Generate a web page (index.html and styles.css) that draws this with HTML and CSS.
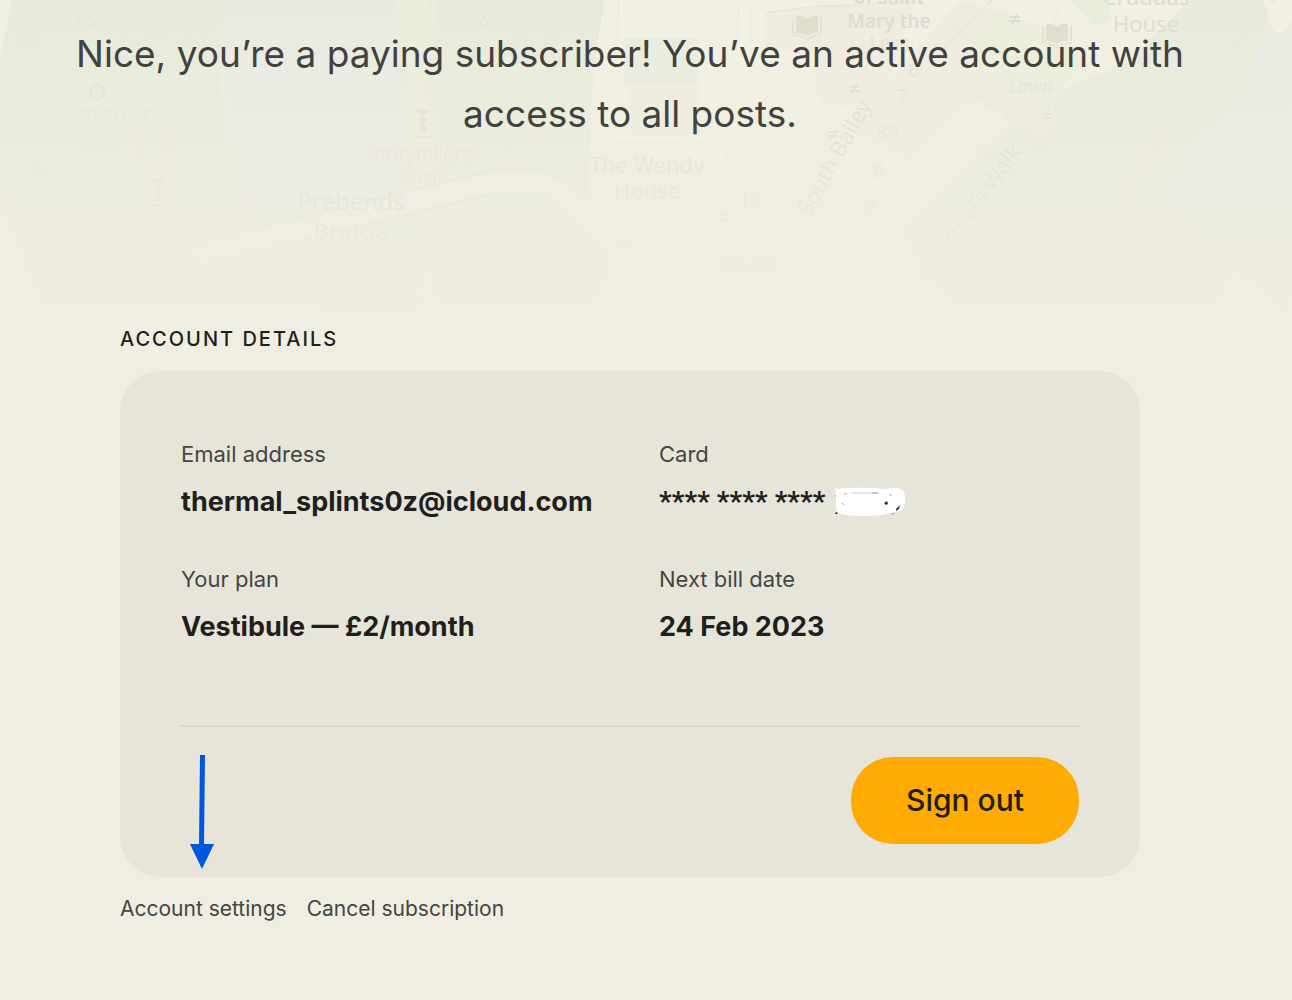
FILE: index.html
```html
<!DOCTYPE html>
<html lang="en">
<head>
<meta charset="utf-8">
<meta name="viewport" content="width=device-width, initial-scale=1">
<title>Account</title>
<link rel="stylesheet" href="styles.css">
</head>
<body>
<svg class="map" viewBox="0 0 1292 320" preserveAspectRatio="xMidYMin slice" aria-hidden="true">
  <defs>
    <linearGradient id="fade" x1="0" y1="0" x2="0" y2="1">
      <stop offset="0" stop-color="#f0eee2" stop-opacity="0"/>
      <stop offset="0.4" stop-color="#f0eee2" stop-opacity="0.48"/>
      <stop offset="0.75" stop-color="#f0eee2" stop-opacity="0.85"/>
      <stop offset="1" stop-color="#f0eee2"/>
    </linearGradient>
    <g id="book"><path d="M3 2q7-1 11 3v17q-5-4-11-3zM25 2q-7-1-11 3v17q5-4 11-3z" fill="#dfdccc"/><path d="M0 4v17q9 0 14 5 5-5 14-5V4" fill="none" stroke="#e4e1d2" stroke-width="2"/></g>
    <g id="tree" fill="none" stroke="#e0e5d3"><path d="M5 14V9M5 9a4 4 0 1 1 1 0M14 14v-4M10 10l4-9 5 9z"/></g>
    <g id="gate" fill="none" stroke="#d8d7cd" stroke-width="1.500"><path d="M0 3h11M0 7h11M8 0L3 10"/></g>
    <path id="tower" d="M-1 0h12v3H8L6 6l3 4-3 4 3 4-1 5H2l-1-5 3-4-3-4 3-4-2-3h-3zM-4 26h17v2H-4z" fill="#dddccb"/>
  </defs>
  <rect width="1292" height="320" fill="#f2efe3"/>
  <path d="M12 0H221v80l12 75 12 70 100 95H45L15 235 0 200V60z" fill="#e7ebda"/>
  <path d="M397 0H603L592 90l-5 100-4 25 30 35-20 70H430l-20-130-10-90z" fill="#e7ebda"/>
  <path d="M397 0h38v320h-20L405 120z" fill="#eaedda"/>
  <path d="M221 0H397l4 75 8 60 10 185H330L250 225l-18-70-11-90z" fill="#e8eae2"/>
  <path d="M1190 0H1265l15 40 12-20v180l-92 120H960l-60-90 153-150 10 10L1130 60z" fill="#e7ebda"/>
  <path d="M1264 0h28v15l-12 27-12-22z" fill="#f3f0e3"/>
  <path d="M1292 28l-32 12-10 45-50 50-40 65 132 120z" fill="#e8eae2"/>
  <path d="M1070 0h40v20l-16 6z" fill="#e8eeda"/>
  <path d="M765 13l50-7 100-6-35 108-60-2-8-50-47-10zM960 0l110 35-22 100-80-35-60 60-60-30z" fill="#efebdf"/>
  <path d="M965 55l40-45 80 50-42 52z" fill="#ebeeda"/>
  <rect x="624" y="38" width="74" height="47" fill="#e8ecdf"/>
  <rect x="627" y="89" width="73" height="46" fill="#efebdf"/>
  <path d="M196 256L490 183q55-10 80 20l45 40 100-6 95-25" fill="none" stroke="#f1f0e7" stroke-width="18"/>
  <g fill="none" stroke="#dbdcd0" stroke-width="1.500">
    <path d="M192 243L490 171M198 265L495 193"/>
  </g>
  <g fill="none" stroke="#e5e5da">
    <path d="M603 0l-12 90-3 120M209 0l-5 35-7 48M765 13l50-7h45M615 143l110-1 8 70"/>
    <path d="M945 20l112 92M1053 110l42-55M1060 10l-12 25M900 105l100 55M618 0v38M738 5v40M751 5v40"/>
  </g>
  <g fill="none" stroke="#f1e4da" stroke-width="3" stroke-dasharray="6 5">
    <path d="M123 0v100l15 45 12 40M197 0l-20 80-10 90 2 60M430 0v150M517 0l4 65 8 70M555 0l-6 55-10 80M431 83l60-8 30 30"/>
    <path d="M992 0l-60 60 70 55 40 30M1275 0L1170 120l-50 90-70 70M0 195l30 55"/>
  </g>
  <use href="#tree" x="76" y="15"/><use href="#tree" x="18" y="36"/><use href="#tree" x="148" y="27"/>
  <use href="#tree" x="18" y="105"/><use href="#tree" x="152" y="117"/><use href="#tree" x="30" y="166"/>
  <use href="#tree" x="82" y="206"/><use href="#tree" x="212" y="195"/><use href="#tree" x="470" y="15"/>
  <use href="#tree" x="450" y="85"/><use href="#tree" x="1125" y="80"/><use href="#tree" x="1150" y="205"/>
  <use href="#book" x="793" y="14"/><use href="#book" x="1043" y="22"/>
  <use href="#gate" x="1009" y="14"/><use href="#gate" x="1041" y="111"/><use href="#gate" x="849" y="84"/>
  <use href="#gate" x="828" y="129"/><use href="#gate" x="719" y="212"/><use href="#gate" x="616" y="238"/>
  <use href="#tower" x="418" y="110"/><use href="#tower" x="153" y="179"/>
  <circle cx="97" cy="92" r="7" fill="none" stroke="#dde3e0" stroke-width="3"/>
  <circle cx="97" cy="92" r="1" fill="#dde3e0"/>
  <g class="map-text">
    <g fill="#e0e4e0"><text x="98" y="121">Southstreet</text><text x="98" y="145">Well</text></g>
    <g fill="#e4ddcc"><text x="422" y="161">Storyteller’s</text><text x="422" y="184">Chair</text><text x="160" y="231">Reveal</text><text x="750" y="206">13</text><text x="748" y="270">House</text></g>
    <g fill="#cfd1c4" class="map-large"><text x="351" y="210">Prebends</text><text x="351" y="240">Bridge</text></g>
    <g fill="#dddcd1" class="map-mid"><text x="647" y="173">The Wendy</text><text x="647" y="199">House</text><text x="1146" y="5">Cruddas</text><text x="1146" y="32">House</text></g>
    <g fill="#dcdad2" class="map-bold"><text x="889" y="4">of Saint</text><text x="889" y="28">Mary the</text><text x="889" y="50" fill="#e5e3d9">Less</text></g>
    <g fill="#e3e1d6"><text x="1031" y="93" font-style="italic">Lawn</text><text x="888" y="139">8A</text><text x="903" y="103">7</text><text x="914" y="77">6</text><text x="879" y="178">8</text><text x="869" y="213">9</text></g>
    <g fill="#d7d8cd" class="map-mid"><text transform="translate(841 161) rotate(-61)">South Bailey</text><text transform="translate(976 216) rotate(-54)">Principal’s Walk</text></g>
  </g>
  <rect width="1292" height="320" fill="url(#fade)"/>
</svg>

<main class="page">
  <h1 class="intro">Nice, you’re a paying subscriber! You’ve an active account with access to all posts.</h1>

  <section class="account" aria-labelledby="account-title">
    <h2 class="account-title" id="account-title">Account details</h2>
    <div class="card">
      <dl class="details">
        <div class="detail"><dt>Email address</dt><dd>thermal_splints0z@icloud.com</dd></div>
        <div class="detail"><dt>Card</dt><dd class="card-number">**** **** ****
          <svg class="scribble" width="72" height="30" viewBox="0 0 72 30" aria-hidden="true">
            <path d="M2 1q3 2 6 0 25-1 45 1 7-2 14 0 4 2 4 10 0 11-7 13-8 1-16 3-20 2-36 0-10-1-10-8V12q-1-6 0-11z" fill="#fff"/>
            <path d="M17 6h28" stroke="#e6e5df" stroke-width="2"/>
            <path d="M10 8l3-2M38 6h6M55 7l3 2M8 16l2 2M57 27l4-1M0 9h2" fill="none" stroke="#aaa"/>
            <path d="M50 16l3-2 1 3-2 1zM62 22l4-4-1 4-3 2zM2 25l2 1-1 1H1z" fill="#333"/>
          </svg></dd></div>
        <div class="detail"><dt>Your plan</dt><dd>Vestibule — £2/month</dd></div>
        <div class="detail"><dt>Next bill date</dt><dd>24 Feb 2023</dd></div>
      </dl>
      <div class="card-footer">
        <button class="sign-out" type="button">Sign out</button>
      </div>
      <svg class="pointer" width="26" height="115" viewBox="0 0 26 115" aria-hidden="true">
        <path d="M11 1h5l-1 89h10L13 115 1 90h9z" fill="#0057dc"/>
      </svg>
    </div>
    <nav class="links" aria-label="Account">
      <a href="#settings">Account settings</a>
      <a href="#cancel">Cancel subscription</a>
    </nav>
  </section>
</main>
</body>
</html>
```

FILE: styles.css
```css
* { box-sizing: border-box; }

body {
  position: relative;
  min-height: 100vh;
  margin: 0;
  background: #f0eee2;
  color: #1f1f1e;
  font-family: Inter, "Liberation Sans", sans-serif;
}

.map {
  position: absolute;
  top: 0;
  left: 0;
  z-index: -1;
  width: 100%;
  height: 320px;
}

.map-text {
  font-family: "Noto Sans", sans-serif;
  font-size: 19px;
  text-anchor: middle;
}
.map-mid { font-size: 22px; }
.map-large { font-size: 24px; }
.map-bold { font-size: 19px; font-weight: 600; }

.page { padding: 24px 92px 60px 60px; }

.intro {
  margin: 0;
  color: #41413e;
  font-size: 37px;
  font-weight: 400;
  line-height: 60px;
  text-align: center;
}

.account {
  max-width: 1020px;
  margin: 180px auto 0;
}

.account-title {
  margin: 0 0 17px;
  font-size: 20px;
  font-weight: 500;
  line-height: 30px;
  letter-spacing: 2px;
  text-transform: uppercase;
}

.card {
  position: relative;
  padding: 61px 61px 33px;
  border-radius: 40px;
  background: #e7e5da;
}

.details {
  display: grid;
  grid-template-columns: 1fr 1fr;
  gap: 36px 58px;
  margin: 0;
  padding-bottom: 79px;
  border-bottom: 2px solid #d9d7cb;
}

.detail dt {
  margin-bottom: 7px;
  color: #454542;
  font-size: 22px;
  line-height: 44px;
}

.detail dd {
  margin: 0;
  font-size: 27px;
  font-weight: 700;
  line-height: 38px;
  white-space: nowrap;
}

.detail .card-number {
  display: flex;
  align-items: center;
  gap: 8px;
  height: 38px;
  font-family: Roboto, "Liberation Sans", sans-serif;
  font-size: 28px;
  line-height: 34px;
}

.card-footer {
  display: flex;
  justify-content: flex-end;
  padding-top: 30px;
}

.sign-out {
  padding: 24px 55px;
  border: 0;
  border-radius: 42px;
  background: #ffab03;
  color: #1f1f1e;
  font: 500 30px/39px Inter, "Liberation Sans", sans-serif;
}

.pointer {
  position: absolute;
  bottom: 8px;
  left: 69px;
}

.links {
  display: flex;
  gap: 20px;
  margin-top: 17px;
  font-size: 21px;
  line-height: 30px;
}

.links a {
  color: #454542;
  text-decoration: none;
}
```
